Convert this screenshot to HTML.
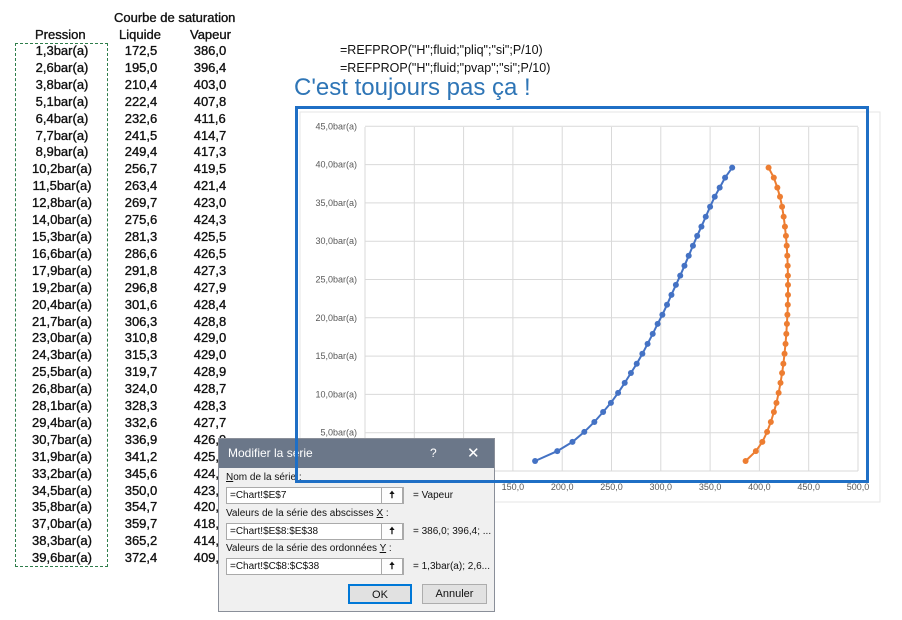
<!DOCTYPE html>
<html><head><meta charset="utf-8"><style>
body{margin:0;width:902px;height:620px;background:#fff;position:relative;overflow:hidden;font-family:"Liberation Sans Narrow","Liberation Sans",sans-serif;}
.t{position:absolute;font-size:13px;color:#111;white-space:nowrap}
.b{-webkit-text-stroke:0.35px #111}
table{position:absolute;left:16px;top:43px;border-collapse:collapse;font-size:13px;-webkit-text-stroke:0.35px #111;color:#111}
td{height:16.9px;padding:0;text-align:center;line-height:16.9px}
.dlg{position:absolute;left:218px;top:438px;width:277px;height:174px;background:#f0f0f0;border:1px solid #8a8f99;box-sizing:border-box;font-family:"Liberation Sans",sans-serif;font-size:10px;color:#111}
.tb{height:29px;background:#6b7789;color:#fff;font-size:12px;line-height:29px;padding-left:9px;position:relative}
.inp{position:absolute;left:7px;width:178px;height:17px;background:#fff;border:1px solid #aaa;box-sizing:border-box;line-height:15px;padding-left:3px}
.ub{position:absolute;right:0;top:-1px;width:22px;height:17px;border:1px solid #aaa;box-sizing:border-box;background:#fdfdfd;text-align:center;font-weight:bold}
.lab{position:absolute;left:7px}
.eq{position:absolute;left:194px}
.btn{position:absolute;top:145px;height:20px;box-sizing:border-box;border:1px solid #adadad;background:#e1e1e1;text-align:center;line-height:18px;font-size:11px}
</style></head><body>
<div class="t b" style="left:114px;top:10px;font-size:13px">Courbe de saturation</div>
<div class="t b" style="left:35px;top:27px">Pression</div>
<div class="t b" style="left:119px;top:27px">Liquide</div>
<div class="t b" style="left:190px;top:27px">Vapeur</div>
<div style="position:absolute;left:15px;top:43px;width:91px;height:522px;border:1.5px dashed #2e7d4a"></div>
<table>
<tr><td style="width:92px">1,3bar(a)</td><td style="width:66px">172,5</td><td style="width:72px">386,0</td></tr>
<tr><td>2,6bar(a)</td><td>195,0</td><td>396,4</td></tr>
<tr><td>3,8bar(a)</td><td>210,4</td><td>403,0</td></tr>
<tr><td>5,1bar(a)</td><td>222,4</td><td>407,8</td></tr>
<tr><td>6,4bar(a)</td><td>232,6</td><td>411,6</td></tr>
<tr><td>7,7bar(a)</td><td>241,5</td><td>414,7</td></tr>
<tr><td>8,9bar(a)</td><td>249,4</td><td>417,3</td></tr>
<tr><td>10,2bar(a)</td><td>256,7</td><td>419,5</td></tr>
<tr><td>11,5bar(a)</td><td>263,4</td><td>421,4</td></tr>
<tr><td>12,8bar(a)</td><td>269,7</td><td>423,0</td></tr>
<tr><td>14,0bar(a)</td><td>275,6</td><td>424,3</td></tr>
<tr><td>15,3bar(a)</td><td>281,3</td><td>425,5</td></tr>
<tr><td>16,6bar(a)</td><td>286,6</td><td>426,5</td></tr>
<tr><td>17,9bar(a)</td><td>291,8</td><td>427,3</td></tr>
<tr><td>19,2bar(a)</td><td>296,8</td><td>427,9</td></tr>
<tr><td>20,4bar(a)</td><td>301,6</td><td>428,4</td></tr>
<tr><td>21,7bar(a)</td><td>306,3</td><td>428,8</td></tr>
<tr><td>23,0bar(a)</td><td>310,8</td><td>429,0</td></tr>
<tr><td>24,3bar(a)</td><td>315,3</td><td>429,0</td></tr>
<tr><td>25,5bar(a)</td><td>319,7</td><td>428,9</td></tr>
<tr><td>26,8bar(a)</td><td>324,0</td><td>428,7</td></tr>
<tr><td>28,1bar(a)</td><td>328,3</td><td>428,3</td></tr>
<tr><td>29,4bar(a)</td><td>332,6</td><td>427,7</td></tr>
<tr><td>30,7bar(a)</td><td>336,9</td><td>426,9</td></tr>
<tr><td>31,9bar(a)</td><td>341,2</td><td>425,9</td></tr>
<tr><td>33,2bar(a)</td><td>345,6</td><td>424,6</td></tr>
<tr><td>34,5bar(a)</td><td>350,0</td><td>423,0</td></tr>
<tr><td>35,8bar(a)</td><td>354,7</td><td>420,9</td></tr>
<tr><td>37,0bar(a)</td><td>359,7</td><td>418,2</td></tr>
<tr><td>38,3bar(a)</td><td>365,2</td><td>414,6</td></tr>
<tr><td>39,6bar(a)</td><td>372,4</td><td>409,3</td></tr>
</table>
<div class="t" style="left:340px;top:43px;font-size:12.5px">=REFPROP("H";fluid;"pliq";"si";P/10)</div>
<div class="t" style="left:340px;top:61px;font-size:12.5px">=REFPROP("H";fluid;"pvap";"si";P/10)</div>
<div class="t" style="left:294px;top:74px;font-size:24px;color:#2e75b6;font-family:'Liberation Sans',sans-serif">C'est toujours pas ça !</div>
<svg id="ch" style="position:absolute;left:0;top:0" width="902" height="620"></svg>
<div class="dlg">
<div class="tb">Modifier la série<span style="position:absolute;left:211px">?</span><span style="position:absolute;left:248px;font-size:15px">✕</span></div>
<div class="lab" style="top:33px"><u>N</u>om de la série :</div>
<div class="inp" style="top:48px">=Chart!$E$7<div class="ub">🠅</div></div><div class="eq" style="top:51px">= Vapeur</div>
<div class="lab" style="top:69px">Valeurs de la série des abscisses <u>X</u> :</div>
<div class="inp" style="top:84px">=Chart!$E$8:$E$38<div class="ub">🠅</div></div><div class="eq" style="top:87px">= 386,0; 396,4; ...</div>
<div class="lab" style="top:104px">Valeurs de la série des ordonnées <u>Y</u> :</div>
<div class="inp" style="top:119px">=Chart!$C$8:$C$38<div class="ub">🠅</div></div><div class="eq" style="top:122px">= 1,3bar(a); 2,6...</div>
<div class="btn" style="left:129px;width:64px;border:2px solid #0078d7">OK</div>
<div class="btn" style="left:203px;width:65px">Annuler</div>
</div>
<svg id="fr" style="position:absolute;left:0;top:0" width="902" height="620"><rect x="296.5" y="107.5" width="571" height="374" fill="none" stroke="#1f6fc5" stroke-width="3"/></svg>
<script>
var L=[172.5,195.0,210.4,222.4,232.6,241.5,249.4,256.7,263.4,269.7,275.6,281.3,286.6,291.8,296.8,301.6,306.3,310.8,315.3,319.7,324.0,328.3,332.6,336.9,341.2,345.6,350.0,354.7,359.7,365.2,372.4];
var V=[386.0,396.4,403.0,407.8,411.6,414.7,417.3,419.5,421.4,423.0,424.3,425.5,426.5,427.3,427.9,428.4,428.8,429.0,429.0,428.9,428.7,428.3,427.7,426.9,425.9,424.6,423.0,420.9,418.2,414.6,409.3];
var P=[1.3,2.6,3.8,5.1,6.4,7.7,8.9,10.2,11.5,12.8,14.0,15.3,16.6,17.9,19.2,20.4,21.7,23.0,24.3,25.5,26.8,28.1,29.4,30.7,31.9,33.2,34.5,35.8,37.0,38.3,39.6];
function X(v){return 365+v*0.986}function Y(p){return 471-p*7.66}
var s='<rect x="300" y="112" width="580" height="390" fill="#fff" stroke="#e6e6e6"/>';
for(var i=0;i<=10;i++){var x=X(i*50);s+='<line x1="'+x+'" y1="127" x2="'+x+'" y2="471" stroke="#d9d9d9"/>';s+='<text x="'+x+'" y="490" font-size="9" text-anchor="middle" fill="#595959" font-family="Liberation Sans">'+(i*50)+',0</text>';}
for(var j=0;j<=9;j++){var y=Y(j*5);s+='<line x1="365" y1="'+y+'" x2="858" y2="'+y+'" stroke="#d9d9d9"/>';s+='<text x="357" y="'+(y+3)+'" font-size="9" text-anchor="end" fill="#595959" font-family="Liberation Sans">'+(j*5)+',0bar(a)</text>';}
function ser(a,c){var p=a.map(function(v,k){return X(v).toFixed(1)+','+Y(P[k]).toFixed(1)}).join(' ');var r='<polyline points="'+p+'" fill="none" stroke="'+c+'" stroke-width="2"/>';a.forEach(function(v,k){r+='<circle cx="'+X(v)+'" cy="'+Y(P[k])+'" r="3" fill="'+c+'"/>'});return r}
s+=ser(L,'#4472c4')+ser(V,'#ed7d31');
document.getElementById('ch').innerHTML=s;
</script>
</body></html>
